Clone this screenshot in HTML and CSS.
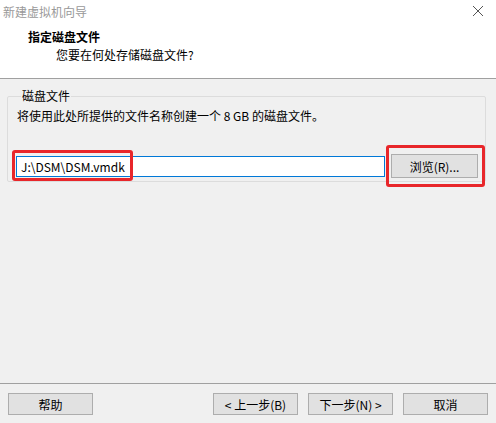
FILE: index.html
```html
<!DOCTYPE html>
<html lang="zh-CN">

<head>
    <meta charset="UTF-8">
    <meta name="viewport" content="width=device-width, initial-scale=1.0">
    <title>新建虚拟机向导</title>
    <link rel="stylesheet" href="styles.css">
</head>

<body>

    <div class="wizard">
        <div class="head">
            <div class="title-bar">
                <span class="title">新建虚拟机向导</span>
                <span class="close">
                    <svg width="12" height="12" viewBox="0 0 12 12">
                        <path d="M1 1 L11 11 M11 1 L1 11" stroke="#555" stroke-width="1" fill="none" />
                    </svg>
                </span>
            </div>
            <h1>指定磁盘文件</h1>
            <p class="sub">您要在何处存储磁盘文件?</p>
        </div>

        <div class="main">
            <fieldset class="group">
                <legend>磁盘文件</legend>
                <p class="desc">将使用此处所提供的文件名称创建一个 8 GB 的磁盘文件。</p>
                <div class="file-row">
                    <div class="path">
                        <input type="text" value="J:\DSM\DSM.vmdk">
                        <span class="mark mark-path"></span>
                    </div>
                    <div class="browse-wrap">
                        <button class="btn browse">浏览(R)...</button>
                        <span class="mark mark-browse"></span>
                    </div>
                </div>
            </fieldset>
        </div>

        <div class="foot">
            <button class="btn">帮助</button>
            <div class="nav">
                <button class="btn">&lt; 上一步(B)</button>
                <button class="btn">下一步(N) &gt;</button>
                <button class="btn">取消</button>
            </div>
        </div>
    </div>

</body>

</html>
```

FILE: styles.css
```css
* {
    margin: 0;
    padding: 0;
    box-sizing: border-box;
}

body {
    width: 496px;
    height: 423px;
    overflow: hidden;
    font-family: "Noto Sans CJK SC", "Noto Sans", sans-serif;
    font-size: 12px;
    color: #000;
    background: #f0f0f0;
}

.wizard {
    height: 423px;
    display: flex;
    flex-direction: column;
}

/* white header */
.head {
    height: 79px;
    background: #fff;
    border-bottom: 1px solid #a0a0a0;
}

.title-bar {
    height: 22px;
    display: flex;
    justify-content: space-between;
    align-items: center;
    padding: 0 12px 0 3px;
}

.title {
    color: #999;
    font-size: 12px;
}

.close {
    display: flex;
}

.head h1 {
    font-size: 12px;
    font-weight: bold;
    padding-left: 28px;
    margin-top: 6px;
    line-height: 17px;
}

.head .sub {
    padding-left: 56px;
    margin-top: 1px;
    line-height: 17px;
}

/* middle area */
.main {
    flex: 1;
    padding: 10px 10px 0 7px;
}

.group {
    border: 1px solid #dcdcdc;
    border-radius: 2px;
    height: 93px;
    padding: 0 7px 0 8px;
}

.group legend {
    padding: 0 1px;
    margin-left: 5px;
    line-height: 14px;
}

.desc {
    margin-top: 4px;
    margin-left: 1px;
    line-height: 17px;
}

.file-row {
    display: flex;
    align-items: center;
    justify-content: space-between;
    margin-top: 30px;
}

.path,
.browse-wrap {
    position: relative;
}

.path input {
    display: block;
    width: 369px;
    height: 21px;
    border: 1px solid #0078d7;
    background: #fff;
    font-family: "Noto Sans CJK SC", "Noto Sans", sans-serif;
    font-size: 12px;
    padding: 0 4px;
    outline: none;
}

/* red highlight boxes drawn over the controls */
.mark {
    position: absolute;
    border: 3px solid #e8262a;
    border-radius: 3px;
    pointer-events: none;
}

.mark-path {
    left: -4px;
    top: -6px;
    width: 121px;
    height: 31px;
}

.mark-browse {
    left: -5px;
    top: -9px;
    width: 99px;
    height: 42px;
}

.btn {
    width: 85px;
    height: 22px;
    border: 1px solid #adadad;
    background: #e1e1e1;
    font-family: "Noto Sans CJK SC", "Noto Sans", sans-serif;
    font-size: 12px;
    color: #000;
}

.browse {
    width: 87px;
    height: 24px;
}

/* bottom buttons */
.foot {
    height: 40px;
    border-top: 1px solid #a0a0a0;
    display: flex;
    justify-content: space-between;
    padding: 9px 8px 0 8px;
}

.nav {
    display: flex;
    gap: 10px;
}
```
